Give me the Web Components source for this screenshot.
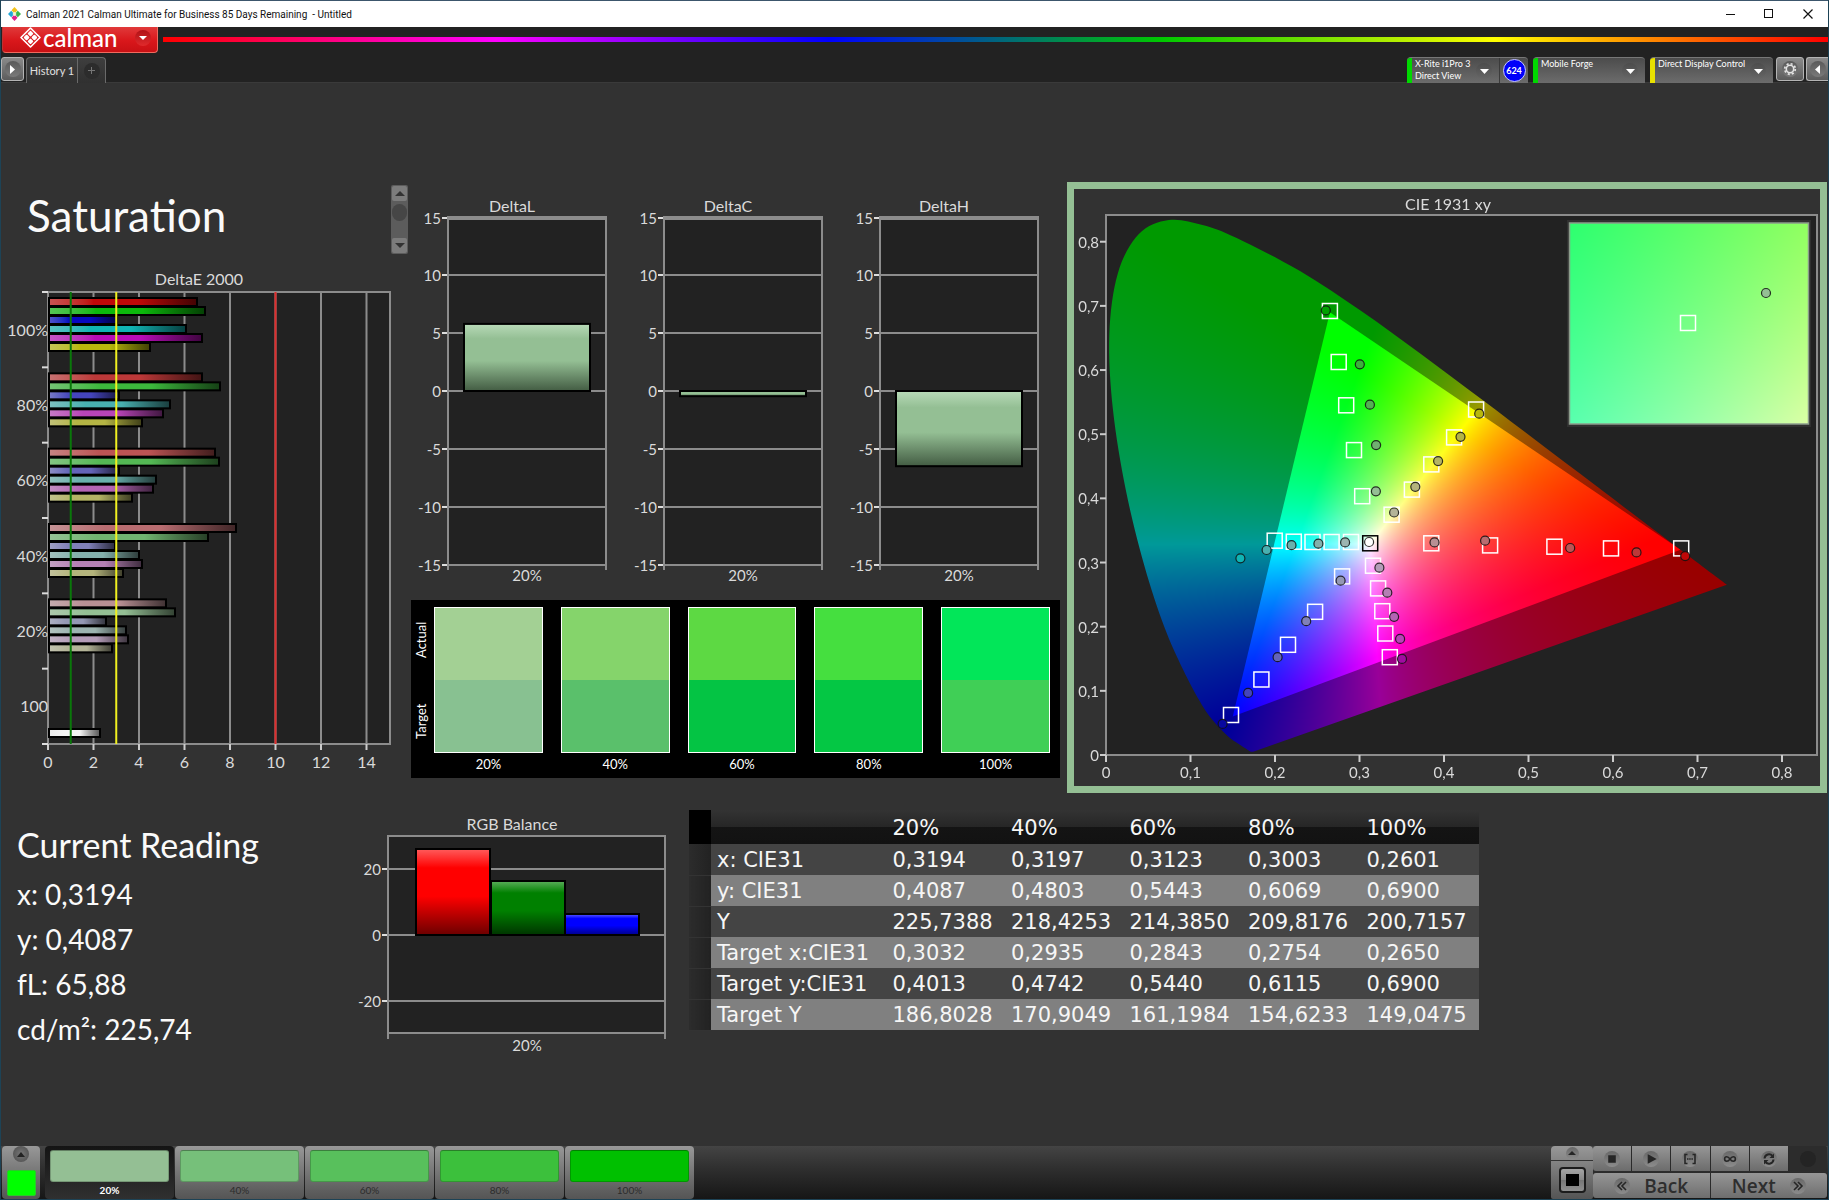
<!DOCTYPE html>
<html lang="en">
<head>
<meta charset="utf-8">
<title>Calman 2021 Calman Ultimate for Business</title>
<style>
  * { box-sizing: border-box; }
  body {
    margin: 0; min-height: 100vh; display: flex; flex-direction: column;
    background: #323232; color: #f0f0f0;
    border: 1px solid #1d4356; border-top: 0;
    font-family: Lato, "Open Sans", sans-serif;
  }
  main { flex: 1; padding-top: 99px; background: #323232; }
  .upper { display: grid; grid-template-columns: 409fr 657fr 760fr 1fr; }
  .lower { display: grid; grid-template-columns: 349fr 339fr 790fr 349fr; padding-top: 7px; }
  .left, .middle { display: flex; flex-direction: column; }
  .middle { padding-top: 11px; gap: 7px; }
  .deltas { display: grid; grid-template-columns: 216fr 216fr 216fr 9fr; }
  .lower cm-data-table { margin-top: 10px; align-self: start; }
</style>
</head>
<body>
<cm-title-bar>Calman 2021 Calman Ultimate for Business 85 Days Remaining&nbsp; - Untitled</cm-title-bar>
<cm-brand-bar></cm-brand-bar>
<cm-tool-bar>
  <cm-device status="#00d800" badge="624" wide="121"><span>X-Rite i1Pro 3</span><span>Direct View</span></cm-device>
  <cm-device status="#00d800" wide="112"><span>Mobile Forge</span></cm-device>
  <cm-device status="#e8e000" wide="123"><span>Direct Display Control</span></cm-device>
</cm-tool-bar>
<main>
  <section class="upper">
    <div class="left">
      <cm-page-heading>Saturation</cm-page-heading>
      <cm-delta-e></cm-delta-e>
    </div>
    <div class="middle">
      <div class="deltas">
        <cm-delta-chart name="DeltaL" value="5.8"></cm-delta-chart>
        <cm-delta-chart name="DeltaC" value="-0.45"></cm-delta-chart>
        <cm-delta-chart name="DeltaH" value="-6.5"></cm-delta-chart>
      </div>
      <cm-swatches></cm-swatches>
    </div>
    <cm-cie-chart></cm-cie-chart>
  </section>
  <section class="lower">
    <cm-reading>
      <span slot="title">Current Reading</span>
      <span>x: 0,3194</span><span>y: 0,4087</span><span>fL: 65,88</span><span>cd/m²: 225,74</span>
    </cm-reading>
    <cm-rgb-balance></cm-rgb-balance>
    <cm-data-table></cm-data-table>
  </section>
</main>
<cm-footer></cm-footer>

<script>
const BASE = `
  * { box-sizing: border-box; }
  :host { display: block; }
  svg { display: block; }
  button { font: inherit; color: inherit; border: 0; padding: 0; margin: 0; background: none; }
  text { font-family: Lato, sans-serif; }
`;
class CmElement extends HTMLElement {
  connectedCallback() {
    if (this.shadowRoot) return;
    const root = this.attachShadow({ mode: 'open' });
    root.innerHTML = `<style>${BASE}${this.css()}</style>${this.html()}`;
    this.ready(root);
  }
  css() { return ''; }
  html() { return ''; }
  ready() {}
}
const define = (name, cls) => customElements.define(name, cls);
const LINE = '#8c8c8c';

/* Round recessed glyph holder used throughout the chrome */
define('cm-knob', class extends CmElement {
  css() { return `
    :host { flex: none; width: 16px; height: 16px; border-radius: 50%; display: flex; align-items: center; justify-content: center;
      background: var(--knob, linear-gradient(#4c4c4c, #666)); }
    slot { display: contents; }`; }
  html() { return '<slot></slot>'; }
});
const tri = (dir, color, w = 9, h = 5) => {
  const p = { down: `M0 0H${w}L${w / 2} ${h}Z`, up: `M0 ${h}H${w}L${w / 2} 0Z`, right: `M0 0V${w}L${h} ${w / 2}Z`, left: `M${h} 0V${w}L0 ${w / 2}Z` }[dir];
  const side = dir === 'left' || dir === 'right';
  return `<svg width="${side ? h : w}" height="${side ? w : h}" style="display:block" aria-hidden="true"><path d="${p}" fill="${color}"/></svg>`;
};

define('cm-title-bar', class extends CmElement {
  css() { return `
    :host { display: flex; align-items: center; height: 27px; background: #fff; color: #111; padding-left: 7px;
      border-top: 1px solid #3c566c; font: 10px Roboto, "Open Sans", sans-serif; }
    .name { flex: 1; padding-left: 5px; }
    .wc { width: 38px; height: 26px; display: flex; align-items: center; justify-content: center; }
    .wc:last-child { width: 40px; }`; }
  html() { return `
    <svg width="13" height="14" viewBox="0 0 13 14" aria-hidden="true">
      <path d="M6.500 0L9.500 3.300L6.500 6.500L3.500 3.300Z" fill="#f2c21a"/>
      <path d="M3.200 3.700L6.200 7L3.200 10.300L0 7Z" fill="#22a7d8"/>
      <path d="M9.800 3.700L13 7L9.800 10.300L6.800 7Z" fill="#39b54a"/>
      <path d="M6.500 7.500L9.500 10.700L6.500 14L3.500 10.700Z" fill="#e0218a"/>
      <path d="M6.500 4.800L8.500 7L6.500 9.200L4.500 7Z" fill="#f0f4d0"/>
    </svg>
    <span class="name"><slot></slot></span>
    <button class="wc" aria-label="Minimize"><svg width="10" height="10"><path d="M0 5.500H9" stroke="#111"/></svg></button>
    <button class="wc" aria-label="Maximize"><svg width="10" height="10"><rect x=".5" y=".5" width="8" height="8" fill="none" stroke="#111"/></svg></button>
    <button class="wc" aria-label="Close"><svg width="10" height="10"><path d="M.5 .5L9.500 9.500M9.500 .5L.5 9.500" stroke="#111" stroke-width="1.200"/></svg></button>`; }
});

define('cm-brand-bar', class extends CmElement {
  css() { return `
    :host { display: flex; align-items: flex-start; background: #222; height: 28px; padding-left: 1px; }
    .brand { display: flex; align-items: center; width: 156px; height: 26px; padding: 0 6px 4px 17px; color: #fff;
      background: linear-gradient(#e0393a, #d9171b 55%, #c81014); border: 1px solid #ef6a5e; border-top: 0; border-left-color: #b33; border-radius: 0 0 4px 4px; }
    .word { flex: 1; text-align: left; padding-left: 2px; font-size: 24px; font-weight: 500; line-height: 20px; }
    cm-knob { --knob: linear-gradient(#b01216, #e02a2c); }
    .spectrum { flex: 1; height: 5px; margin: 10px 0 0 5px;
      background: linear-gradient(90deg, #f00 0%, #f0f 20%, #00f 40%, #00c800 60%, #ff0 80%, #f00 100%); }`; }
  html() { return `
    <button class="brand" aria-label="calman menu">
      <svg width="21" height="21" viewBox="0 0 21 21" aria-hidden="true">
        <path d="M10.500 1L20 10.500L10.500 20L1 10.500Z" fill="none" stroke="#fff" stroke-width="1.600" stroke-linejoin="round"/>
        <g transform="rotate(45 10.500 10.500)" fill="#fff"><rect x="5.500" y="5.500" width="4.500" height="4.500" rx="1"/><rect x="11" y="5.500" width="4.500" height="4.500" rx="1"/><rect x="5.500" y="11" width="4.500" height="4.500" rx="1"/><rect x="11" y="11" width="4.500" height="4.500" rx="1"/></g>
      </svg>
      <span class="word">calman</span>
      <cm-knob>${tri('down', '#fff', 8, 4)}</cm-knob>
    </button>
    <div class="spectrum"></div>`; }
});

define('cm-device', class extends CmElement {
  css() { return `
    :host { display: flex; flex: none; width: ${this.getAttribute('wide')}px; height: 26px; border-radius: 4px 4px 0 0; overflow: hidden;
      background: linear-gradient(#4c4c4c, #6c6c6c); border-top: 1px solid #777;
      color: #fff; font: 9px/12px Lato, sans-serif; }
    .led { flex: none; width: 5px; background: ${this.getAttribute('status')}; }
    .pick { flex: 1; min-width: 0; display: flex; padding: 0 7px 0 3px; text-align: left; }
    .names { flex: 1; min-width: 0; display: flex; flex-direction: column; white-space: nowrap; }
    .pick cm-knob { margin-top: 5px; }
    .badge { flex: none; width: 29px; border-left: 1px solid #3a3a3a; display: flex; align-items: center; justify-content: center; }
    .disc { width: 23px; height: 23px; border-radius: 50%; background: #0000fa; border: 1px solid #c8c8ff; color: #fff; font: bold 9px/21px Lato, sans-serif; text-align: center; }`; }
  html() {
    const b = this.getAttribute('badge');
    return `<span class="led"></span>
      <button class="pick"><span class="names"><slot></slot></span><cm-knob>${tri('down', '#fff', 9, 5)}</cm-knob></button>
      ${b ? `<button class="badge"><span class="disc">${b}</span></button>` : ''}`;
  }
});

define('cm-tool-bar', class extends CmElement {
  css() { return `
    :host { display: flex; align-items: flex-start; gap: 5px; background: #222; height: 28px; padding-top: 2px; border-bottom: 1px solid #3a3a3a; }
    .sq { width: 23px; height: 24px; border: 1px solid #b4b4b4; border-radius: 3px; background: linear-gradient(#8a8a8a, #5c5c5c); display: flex; align-items: center; justify-content: center; }
    .wide { width: 28px; }
    .tabs { display: flex; height: 26px; margin-left: -3px; border: 1px solid #6a6a6a; border-bottom: 0; border-radius: 4px 4px 0 0; background: linear-gradient(#3e3e3e, #303030); color: #e0e0e0; font-size: 11px; }
    .tabs button { width: 50px; }
    .tabs .add { width: 28px; border-left: 1px solid #6a6a6a; display: flex; align-items: center; justify-content: center; }
    .add cm-knob { --knob: #2c2c2c; }
    .fill { flex: 1; }
    .end { display: flex; gap: 2px; margin-left: -2px; }
    .end .sq:last-child { width: 22px; border-right: 0; border-radius: 3px 0 0 3px; }
    .sq cm-knob { --knob: linear-gradient(#5a5a5a, #7a7a7a); }`; }
  html() { return `
    <button class="sq" aria-label="Expand"><cm-knob>${tri('right', '#fff', 9, 5)}</cm-knob></button>
    <div class="tabs"><button>History 1</button><button class="add" aria-label="Add tab"><cm-knob><svg width="7" height="7"><path d="M3.500 0V7M0 3.500H7" stroke="#777"/></svg></cm-knob></button></div>
    <span class="fill"></span>
    <slot></slot>
    <div class="end">
      <button class="sq wide" aria-label="Settings"><cm-knob><svg width="14" height="14" viewBox="-7 -7 14 14"><circle r="3.700" fill="none" stroke="#e4e4e4" stroke-width="1.600"/><circle r="5.300" fill="none" stroke="#e4e4e4" stroke-width="1.700" stroke-dasharray="2.080 2.080"/></svg></cm-knob></button>
      <button class="sq" aria-label="Collapse"><cm-knob>${tri('left', '#fff', 9, 5)}</cm-knob></button>
    </div>`; }
});

define('cm-page-heading', class extends CmElement {
  css() { return `
    :host { display: flex; justify-content: space-between; padding: 3px 2px 0 26px; color: #fafafa; }
    h1 { margin: 0; font-size: 44px; font-weight: normal; line-height: 60px; }
    .scroll { width: 17px; height: 69px; padding: 1px; background: #5c5c5c; border-radius: 2px; display: flex; flex-direction: column; gap: 3px; align-items: center; }
    .scroll button { width: 15px; height: 15px; background: #7c7c7c; border-radius: 2px; display: flex; align-items: center; justify-content: center; }
    .thumb { width: 15px; height: 17px; border-radius: 8px; background: #464646; }
    .gap { flex: 1; }`; }
  html() { return `<h1><slot></slot></h1>
    <div class="scroll"><button aria-label="Previous">${tri('up', '#333', 10, 5)}</button><span class="thumb"></span><span class="gap"></span><button aria-label="Next">${tri('down', '#333', 10, 5)}</button></div>`; }
});

/* Horizontal DeltaE bars, six colours per saturation level */
define('cm-delta-e', class extends CmElement {
  css() { return `:host { padding-top: 11px; } svg { width: 100%; height: auto; } text { fill: #dadada; font-size: 16px; }`; }
  html() {
    const X = 47, Y = 27, U = 22.75, W = 342, H = 452, STEP = H / 6;
    const groups = [
      ['100%', ['#c00808', '#0cb80c', '#0808c0', '#10b4b4', '#b80cb8', '#b8b80c'], [148, 156, 68, 137, 153, 101]],
      ['80%', ['#bc3838', '#3cb83c', '#4444bc', '#48b0b0', '#b844b8', '#b4b444'], [153, 171, 70, 121, 114, 93]],
      ['60%', ['#bc5454', '#54b854', '#6464b8', '#68b0ac', '#b464b4', '#b4b464'], [166, 170, 70, 107, 104, 83]],
      ['40%', ['#b86c70', '#70b470', '#8080b8', '#84b0ac', '#b480b4', '#b4b47c'], [187, 159, 66, 90, 93, 74]],
      ['20%', ['#b89094', '#94bf94', '#9498b4', '#9cb4b0', '#b49cb8', '#b4b498'], [117, 126, 57, 77, 79, 63]],
    ];
    const all = groups.flatMap(g => g[1]).concat('#f4f4f4');
    const defs = all.map((c, i) => `<linearGradient id="g${i}"><stop offset="0" stop-color="color-mix(in srgb, ${c} 65%, #ddd)"/><stop offset=".3" stop-color="${c}"/><stop offset=".6" stop-color="${c}"/><stop offset="1" stop-color="color-mix(in srgb, ${c} 35%, #000)"/></linearGradient>`).join('');
    let s = `<text x="198" y="${Y - 7}" text-anchor="middle">DeltaE 2000</text>`;
    s += `<rect x="${X}" y="${Y}" width="${W}" height="${H}" fill="#222" stroke="${LINE}" stroke-width="2"/>`;
    for (let v = 0; v <= 14; v += 2) {
      const x = X + v * U;
      s += `<path d="M${x} ${Y}V${Y + H}" stroke="${LINE}" stroke-width="2"/><path d="M${x} ${Y + H}v6" stroke="#ccc" stroke-width="2"/><text x="${x}" y="${Y + H + 24}" text-anchor="middle">${v}</text>`;
    }
    for (let i = 0; i <= 6; i++) s += `<path d="M${X - 6} ${Y + i * STEP}h6" stroke="#ddd" stroke-width="2"/>`;
    const bar = (y, w, i) => `<rect x="${X + 1}" y="${y}" width="${w}" height="8" fill="url(#g${i})" stroke="#000" stroke-width="2"/>`;
    groups.forEach(([label, , w], g) => {
      s += `<text x="${X}" y="${Y + (g + .5) * STEP + 6}" text-anchor="end">${label}</text>`;
      w.forEach((len, k) => { s += bar(Y + g * STEP + 6 + k * 9, len, g * 6 + k); });
    });
    s += `<text x="${X}" y="${Y + 5.5 * STEP + 6}" text-anchor="end">100</text>` + bar(Y + 437, 51, 30);
    s += `<path d="M${X + U} ${Y}v${H}" stroke="#0a780a" stroke-width="2"/><path d="M${X + 3 * U} ${Y}v${H}" stroke="#f0f020" stroke-width="2"/><path d="M${X + 10 * U} ${Y}v${H}" stroke="#e02c2c" stroke-width="2"/>`;
    return `<svg viewBox="0 0 409 520" role="img" aria-label="DeltaE 2000"><defs>${defs}</defs>${s}</svg>`;
  }
});

const gloss = (id, top, mid, low) => `<linearGradient id="${id}" x2="0" y2="1"><stop offset="0" stop-color="${top}"/><stop offset=".22" stop-color="${mid}"/><stop offset=".55" stop-color="${mid}"/><stop offset="1" stop-color="${low}"/></linearGradient>`;

define('cm-delta-chart', class extends CmElement {
  css() { return `svg { width: 100%; height: auto; } text { fill: #dadada; font-size: 15px; } .t { font-size: 16px; }`; }
  html() {
    const v = +this.getAttribute('value'), name = this.getAttribute('name');
    const X = 38, R = 196, Y = 25, U = 347 / 30, zero = 198;
    let s = `<text class="t" x="102" y="19" text-anchor="middle">${name}</text><rect x="${X}" y="${Y}" width="${R - X}" height="347" fill="#222"/>`;
    for (let t = 15; t >= -15; t -= 5) {
      const y = Math.round(zero - t * U);
      s += `<path d="M${X} ${y}H${R}" stroke="${LINE}" stroke-width="${t === 15 ? 4 : 2}"/><path d="M${X - 6} ${y}h6" stroke="#ddd" stroke-width="2"/><text x="${X - 7}" y="${y + 6}" text-anchor="end">${t}</text>`;
    }
    s += `<path d="M${X} ${Y - 2}V${Y + 352}M${R} ${Y - 2}V${Y + 352}" stroke="${LINE}" stroke-width="2"/>`;
    s += `<rect x="54" y="${v > 0 ? zero - v * U : zero}" width="126" height="${Math.abs(v) * U}" fill="url(#g)" stroke="#000" stroke-width="2"/>`;
    s += `<text x="117" y="388" text-anchor="middle">20%</text>`;
    return `<svg viewBox="0 0 216 400" role="img" aria-label="${name}"><defs>${gloss('g', '#b8dab8', '#94bf94', '#435c43')}</defs>${s}</svg>`;
  }
});

define('cm-rgb-balance', class extends CmElement {
  css() { return `svg { width: 100%; height: auto; } text { fill: #dadada; font-size: 15px; } .t { font-size: 16px; }`; }
  html() {
    let s = `<text class="t" x="162" y="30" text-anchor="middle">RGB Balance</text><rect x="38" y="36" width="277" height="197" fill="#222"/>`;
    [[20, 69], [0, 135], [-20, 201]].forEach(([t, y]) => {
      s += `<path d="M38 ${y}H315" stroke="${LINE}" stroke-width="2"/><path d="M32 ${y}h6" stroke="#ddd" stroke-width="2"/><text x="31" y="${y + 6}" text-anchor="end">${t}</text>`;
    });
    s += `<path d="M38 239V36H315V239M38 233H315" fill="none" stroke="${LINE}" stroke-width="2"/>`;
    [['r', 66, 49], ['g', 141, 81], ['b', 215, 114]].forEach(([c, x, y]) => { s += `<rect x="${x}" y="${y}" width="74" height="${135 - y}" fill="url(#${c})" stroke="#000" stroke-width="2"/>`; });
    s += `<text x="177" y="251" text-anchor="middle">20%</text>`;
    return `<svg viewBox="0 0 339 260" role="img" aria-label="RGB Balance"><defs>${gloss('r', '#ff5c5c', '#ff0000', '#6c0000')}${gloss('g', '#5cae5c', '#008000', '#003400')}${gloss('b', '#5c5cff', '#0000ff', '#000088')}</defs>${s}</svg>`;
  }
});

define('cm-swatches', class extends CmElement {
  css() { return `
    :host { display: grid; grid-template-columns: 23px 109fr repeat(4, 127fr); margin: 0 7px 0 1px; padding: 7px 10px 0 0; height: 178px; background: #000; color: #fff; font-size: 13px; }
    .side { display: grid; grid-template-rows: 66px 96px; justify-items: center; padding-right: 3px; }
    .side span { writing-mode: vertical-rl; transform: rotate(180deg); text-align: center; }
    figure { margin: 0 0 0 18px; text-align: center; }
    .side + figure { margin-left: 0; }
    .pair { height: 146px; border: 1px solid #fff; display: grid; grid-template-rows: 1fr 1fr; }
    figcaption { line-height: 22px; }`; }
  html() {
    const d = [['20%', '#a3d094', '#88c191'], ['40%', '#85d46b', '#5ac06b'], ['60%', '#5dd943', '#04c444'], ['80%', '#45df3f', '#04c744'], ['100%', '#02e659', '#40cf56']];
    return `<div class="side"><span>Actual</span><span>Target</span></div>` + d.map(([t, a, b]) => `<figure><div class="pair"><i style="background:${a}"></i><i style="background:${b}"></i></div><figcaption>${t}</figcaption></figure>`).join('');
  }
});

/* Chromaticity diagram: the colour field is computed per pixel, markers are SVG */
const LOCUS = [[.1741,.005],[.1714,.0051],[.1689,.0069],[.1644,.0109],[.1566,.0177],[.144,.0297],[.1241,.0578],[.1096,.0868],[.0913,.1327],[.0687,.2007],[.0454,.295],[.0235,.4127],[.0082,.5384],[.0039,.6548],[.0139,.7502],[.0389,.812],[.0743,.8338],[.1142,.8262],[.1547,.8059],[.2296,.7543],[.3016,.6923],[.3731,.6245],[.4441,.5547],[.5125,.4866],[.5752,.4242],[.627,.3725],[.6658,.334],[.6915,.3083],[.719,.2809],[.7347,.2653]];
const GAMUT = [[.68,.32],[.265,.69],[.15,.06]];
const TARGETS = [[.265,.692],[.2754,.6125],[.2843,.545],[.2935,.4752],[.3032,.4033],[.438,.5385],[.412,.495],[.385,.453],[.362,.4136],[.338,.3746],[.1997,.334],[.2223,.3325],[.2444,.332],[.267,.332],[.29,.332],[.385,.33],[.4545,.3267],[.5306,.3247],[.5976,.322],[.6807,.322],[.316,.295],[.322,.2596],[.327,.2242],[.3305,.1894],[.3358,.1524],[.2794,.2784],[.2474,.2232],[.2154,.1717],[.1839,.1176],[.1479,.0624]];
const READINGS = [
  ['#00a000', .2601,.693],['#3cb03c', .3003,.609],['#54b054', .3123,.546],['#70b070', .3197,.483],['#94bf94', .3194,.411],
  ['#b8b80c', .4416,.532],['#b4b444', .4195,.496],['#b4b464', .393,.458],['#b4b47c', .366,.418],['#b4b498', .341,.378],
  ['#10b4b4', .159,.3065],['#48b0b0', .19,.3195],['#68b0ac', .2195,.327],['#84b0ac', .2514,.3293],['#9cb4b0', .283,.3314],
  ['#b89094', .3887,.3314],['#b86c70', .4486,.334],['#bc5454', .5493,.3226],['#bc3838', .6278,.3158],['#c00808', .6854,.31],
  ['#b49cb8', .3236,.2919],['#b480b4', .3329,.2529],['#b464b4', .341,.2154],['#b844b8', .348,.181],['#a00ca0', .3503,.1498],
  ['#9498b4', .2776,.2716],['#8080b8', .2369,.2086],['#6464b8', .2031,.1524],['#4444bc', .1682,.0968],['#0808a0', .138,.0484],
];
const CIE = { x: 32, y: 566, sx: 845, sy: 641.6 };
const chroma = (x, y, k) => {
  const X = x / y, Z = (1 - x - y) / y;
  const c = [3.2406 * X - 1.5372 - .4986 * Z, -.9689 * X + 1.8758 + .0415 * Z, .0557 * X - .204 + 1.057 * Z].map(v => Math.max(0, v));
  const m = Math.max(...c) || 1;
  return c.map(v => v / m * 255 * k);
};
const field = (w, h, toXY, k) => {
  const c = document.createElement('canvas'); c.width = w; c.height = h;
  const g = c.getContext('2d'), img = g.createImageData(w, h);
  for (let j = 0, p = 0; j < h; j++) for (let i = 0; i < w; i++, p += 4) {
    const [x, y] = toXY(i + .5, j + .5);
    const [r, gg, b] = chroma(x, Math.max(y, .0005), k);
    img.data[p] = r; img.data[p + 1] = gg; img.data[p + 2] = b; img.data[p + 3] = 255;
  }
  g.putImageData(img, 0, 0);
  return c;
};
define('cm-cie-chart', class extends CmElement {
  css() { return `
    :host { border: 7px solid #94bf94; }
    .stage { position: relative; }
    svg { position: relative; width: 100%; height: auto; }
    canvas { position: absolute; left: 0; top: 0; width: 100%; height: 100%; }
    text { fill: #dadada; font-size: 15px; } .t { font-size: 16px; }`; }
  html() {
    const px = x => CIE.x + x * CIE.sx, py = y => CIE.y - y * CIE.sy;
    let s = `<text class="t" x="374" y="21" text-anchor="middle">CIE 1931 xy</text><rect x="32" y="26" width="711" height="540" fill="none" stroke="${LINE}" stroke-width="2"/>`;
    for (let i = 0; i <= 8; i++) {
      const l = i ? '0,' + i : '0', x = px(i / 10), y = py(i / 10);
      s += `<path d="M${x} 566v7" stroke="#ccc" stroke-width="2"/><path d="M26 ${y}h6" stroke="#ccc" stroke-width="2"/><text x="${x}" y="589" text-anchor="middle">${l}</text><text x="25" y="${y + 6}" text-anchor="end">${l}</text>`;
    }
    const sq = (x, y, c = '#fff') => `<rect x="${(x - 7.5).toFixed(1)}" y="${(y - 7.5).toFixed(1)}" width="15" height="15" fill="none" stroke="${c}" stroke-width="1.500"/>`;
    const ci = (x, y, c) => `<circle cx="${x.toFixed(1)}" cy="${y.toFixed(1)}" r="4.500" fill="${c}" stroke="#101010" stroke-opacity=".85" stroke-width="1.200"/>`;
    TARGETS.forEach(([x, y]) => s += sq(px(x), py(y)));
    READINGS.forEach(([c, x, y]) => s += ci(px(x), py(y), c));
    s += sq(px(.3127), py(.33), '#000') + ci(px(.3114), py(.332), '#fff');
    s += `<rect x="495.500" y="34" width="239" height="201" fill="none" stroke="#8c9c8c" stroke-width="1.500"/>` + sq(614, 134) + ci(692, 104, '#94bf94');
    return `<div class="stage"><canvas width="746" height="597"></canvas><svg viewBox="0 0 746 597" role="img" aria-label="CIE 1931 xy">${s}</svg></div>`;
  }
  ready(root) {
    const g = root.querySelector('canvas').getContext('2d');
    g.fillStyle = '#222'; g.fillRect(32, 26, 711, 540);
    const P = ([x, y]) => [CIE.x + x * CIE.sx, CIE.y - y * CIE.sy];
    const toXY = (i, j) => [(i - CIE.x) / CIE.sx, (CIE.y - j) / CIE.sy];
    const pts = LOCUS.map(P), n = pts.length;
    g.save(); g.beginPath(); g.moveTo(...pts[0]);
    for (let i = 0; i < n - 1; i++) {
      const a = pts[Math.max(0, i - 1)], b = pts[i], c = pts[i + 1], d = pts[Math.min(n - 1, i + 2)];
      g.bezierCurveTo(b[0] + (c[0] - a[0]) / 6, b[1] + (c[1] - a[1]) / 6, c[0] - (d[0] - b[0]) / 6, c[1] - (d[1] - b[1]) / 6, c[0], c[1]);
    }
    g.closePath(); g.clip();
    g.drawImage(field(746, 597, toXY, .6), 0, 0);
    g.beginPath(); GAMUT.map(P).forEach((p, i) => i ? g.lineTo(...p) : g.moveTo(...p)); g.closePath(); g.clip();
    g.drawImage(field(746, 597, toXY, 1), 0, 0);
    g.restore();
    g.fillStyle = '#303030'; g.fillRect(493, 31, 244, 207);
    g.drawImage(field(239, 201, (i, j) => [.3032 + (i - 119) / 4815, .4013 - (j - 101) / 3659], 1), 495, 34);
  }
});

define('cm-reading', class extends CmElement {
  css() { return `
    :host { display: flex; flex-direction: column; padding: 20px 0 0 16px; color: #fafafa; }
    h2 { margin: 0; font-weight: normal; font-size: 34px; line-height: 50px; }
    .rows { display: flex; flex-direction: column; margin-top: 2px; font-size: 28px; line-height: 45px; }`; }
  html() { return `<h2><slot name="title"></slot></h2><div class="rows"><slot></slot></div>`; }
});

define('cm-data-table', class extends CmElement {
  css() { return `
    table { width: 100%; table-layout: fixed; border-collapse: collapse; font: 21px "DejaVu Sans", sans-serif; color: #f6f6f6; }
    th, td { font-weight: normal; text-align: left; padding: 2px 0 0 6px; height: 31px; line-height: 29px; white-space: nowrap; }
    thead th { height: 34px; background: linear-gradient(#333 0%, #262626 50%, #141414 51%, #121212 100%); }
    thead th:first-child { background: #000; }
    tbody tr { background: #444; }
    tbody tr:nth-child(even) { background: #808080; }
    tbody td:first-child { background: linear-gradient(90deg, #2c2c2c, #222); border-bottom: 1px solid #333; }`; }
  html() {
    const rows = [['x: CIE31', '0,3194', '0,3197', '0,3123', '0,3003', '0,2601'], ['y: CIE31', '0,4087', '0,4803', '0,5443', '0,6069', '0,6900'], ['Y', '225,7388', '218,4253', '214,3850', '209,8176', '200,7157'], ['Target x:CIE31', '0,3032', '0,2935', '0,2843', '0,2754', '0,2650'], ['Target y:CIE31', '0,4013', '0,4742', '0,5440', '0,6115', '0,6900'], ['Target Y', '186,8028', '170,9049', '161,1984', '154,6233', '149,0475']];
    return `<table><colgroup><col style="width:22px"><col><col span="5" style="width:15%"></colgroup>
      <thead><tr><th></th><th></th>${['20%', '40%', '60%', '80%', '100%'].map(t => `<th scope="col">${t}</th>`).join('')}</tr></thead>
      <tbody>${rows.map(([h, ...c]) => `<tr><td></td><th scope="row">${h}</th>${c.map(v => `<td>${v}</td>`).join('')}</tr>`).join('')}</tbody></table>`;
  }
});

define('cm-footer', class extends CmElement {
  css() { return `
    :host { display: flex; height: 53px; padding: 0 1px 0 1px; background: linear-gradient(#444, #303030 40%, #161616); }
    .metal { background: linear-gradient(#989898, #5e5e5e 85%, #555); }
    .src { width: 38px; border-radius: 4px; padding: 0 4px 3px; display: flex; flex-direction: column; align-items: center; justify-content: space-between; }
    .src i { display: block; width: 29px; height: 26px; background: #0f0; border: 1px solid #2cc82c; border-radius: 2px; }
    .knob { --knob: linear-gradient(#686868, #8c8c8c); }
    .levels { display: flex; gap: 1px; margin-left: 5px; }
    .lv { width: 129px; border-radius: 4px; padding: 4px 5px 0; display: flex; flex-direction: column; font-size: 10px; line-height: 16px; color: #2c2c2c; text-align: center; }
    .lv i { height: 32px; border-radius: 3px; border: 1px solid #0003; border-top-color: #0005; }
    .lv.on { background: linear-gradient(#141414, #303030); color: #fff; font-weight: bold; }
    .fill { flex: 1; }
    .win { width: 42px; border-radius: 4px 4px 2px 2px; display: flex; flex-direction: column; align-items: center; }
    .win .up { height: 15px; width: 100%; border-bottom: 1px solid #333; display: flex; align-items: center; justify-content: center; }
    .win .up cm-knob { width: 13px; height: 13px; }
    .win .stop { margin-top: 6px; width: 27px; height: 26px; border: 2px solid #1c1c1c; border-radius: 4px; background: linear-gradient(#a4a4a4, #888 50%, #767676 51%, #909090); display: flex; align-items: center; justify-content: center; }
    .panel { width: 234px; display: flex; flex-direction: column; gap: 2px; }
    .row { display: grid; height: 25px; gap: 1px; background: #2a2a2a; border-radius: 3px; overflow: hidden; }
    .row.six { grid-template-columns: repeat(6, 1fr); }
    .row.two { grid-template-columns: 1fr 1fr; font: 600 19px "Open Sans", sans-serif; color: #2e2e2e; }
    .row button { display: flex; align-items: center; justify-content: center; gap: 14px; background: linear-gradient(#969696, #6c6c6c); }
    .row .off { background: #2c2c2c; --knob: #242424; }`; }
  html() {
    const lv = [['20%', '#94bf94'], ['40%', '#76c07a'], ['60%', '#58c05c'], ['80%', '#3cc03c'], ['100%', '#00c000']];
    const k = body => `<cm-knob class="knob">${body}</cm-knob>`;
    const ic = d => `<svg width="14" height="14" viewBox="0 0 14 14" fill="none" stroke="#262626" stroke-width="1.600">${d}</svg>`;
    return `
      <button class="src metal" aria-label="Pattern source"><cm-knob class="knob" style="--knob:radial-gradient(#777,#4a4a4a)">${tri('up', '#222', 8, 5)}</cm-knob><i></i></button>
      <div class="levels">${lv.map(([t, c], i) => `<button class="lv metal${i ? '' : ' on'}"><i style="background:${c}"></i>${t}</button>`).join('')}</div>
      <span class="fill"></span>
      <div class="win metal"><button class="up" aria-label="Show window">${k(tri('up', '#262626', 8, 4))}</button><button class="stop" aria-label="Pattern window"><svg width="13" height="12"><path d="M0 0H13V12H0Z" fill="#000"/></svg></button></div>
      <div class="panel">
        <div class="row six">
          <button aria-label="Stop">${k(ic('<path d="M4 4H10V10H4Z" fill="#262626"/>'))}</button>
          <button aria-label="Play">${k(ic('<path d="M4.500 3.500L11 7L4.500 10.500Z" fill="#262626"/>'))}</button>
          <button aria-label="Read series">${k(ic('<path d="M4.500 2.500H2V11.500H4.500M9.500 2.500H12V11.500H9.500"/><path d="M4 7H10" stroke-dasharray="1.500 .700"/>'))}</button>
          <button aria-label="Continuous">${k(ic('<path d="M7 7C5.800 5.300 5 4.800 3.800 4.800A2.200 2.200 0 0 0 3.800 9.200C5 9.200 5.800 8.700 7 7C8.200 5.300 9 4.800 10.200 4.800A2.200 2.200 0 0 1 10.200 9.200C9 9.200 8.200 8.700 7 7Z"/>'))}</button>
          <button aria-label="Refresh">${k(ic('<path d="M2.500 6.500A4.500 4.500 0 0 1 10.500 4M11.500 7.500A4.500 4.500 0 0 1 3.500 10" stroke-width="2"/><path d="M12 1.500V6H7.500ZM2 12.500V8H6.500Z" fill="#262626" stroke="none"/>'))}</button>
          <button class="off" aria-label="Unavailable" disabled><cm-knob></cm-knob></button>
        </div>
        <div class="row two">
          <button>${k(ic('<path d="M7 3L3 7L7 11M11 3L7 7L11 11"/>'))}Back</button>
          <button>Next${k(ic('<path d="M3 3L7 7L3 11M7 3L11 7L7 11"/>'))}</button>
        </div>
      </div>`;
  }
});
</script>
</body>
</html>
